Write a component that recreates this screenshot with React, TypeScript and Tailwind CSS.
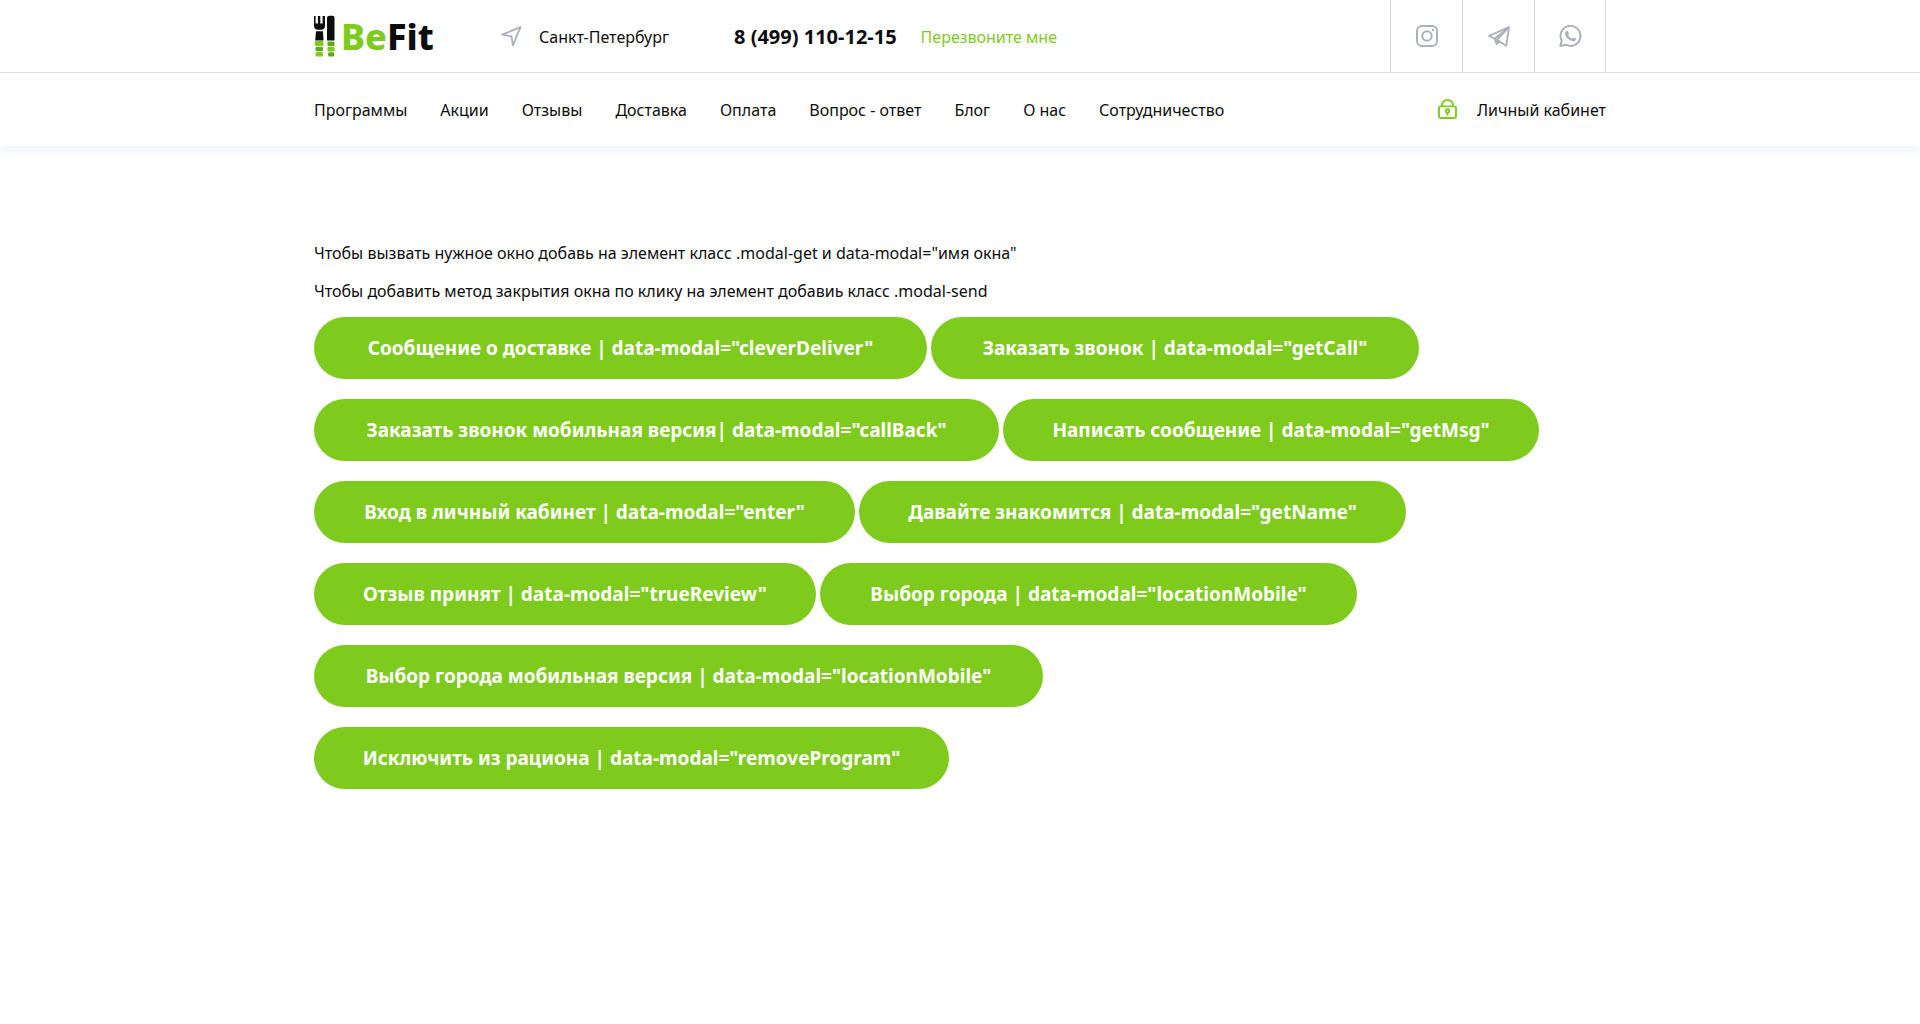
import type { ReactNode } from "react";

const navItems = ["Программы", "Акции", "Отзывы", "Доставка", "Оплата", "Вопрос - ответ", "Блог", "О нас", "Сотрудничество"];

const modalRows = [
  [
    { label: 'Сообщение о доставке | data-modal="cleverDeliver"', modal: "cleverDeliver", size: "min-w-[613px]" },
    { label: 'Заказать звонок | data-modal="getCall"', modal: "getCall", size: "min-w-[488px]" },
  ],
  [
    { label: 'Заказать звонок мобильная версия| data-modal="callBack"', modal: "callBack", size: "min-w-[685px]" },
    { label: 'Написать сообщение | data-modal="getMsg"', modal: "getMsg", size: "min-w-[536px]" },
  ],
  [
    { label: 'Вход в личный кабинет | data-modal="enter"', modal: "enter", size: "min-w-[541px]" },
    { label: 'Давайте знакомится | data-modal="getName"', modal: "getName", size: "min-w-[547px]" },
  ],
  [
    { label: 'Отзыв принят | data-modal="trueReview"', modal: "trueReview", size: "min-w-[502px]" },
    { label: 'Выбор города | data-modal="locationMobile"', modal: "locationMobile", size: "min-w-[537px]" },
  ],
  [{ label: 'Выбор города мобильная версия | data-modal="locationMobile"', modal: "locationMobile", size: "min-w-[729px]" }],
  [{ label: 'Исключить из рациона | data-modal="removeProgram"', modal: "removeProgram", size: "min-w-[635px]" }],
];

function CutleryMark() {
  return (
    <svg width="21" height="42" viewBox="0 0 21 42" aria-hidden="true">
      <path
        fill="#0d0d0d"
        d="M0 1h1.600v7.500h2.300V1h2.400v7.500h2.300V1H11v10c0 2-1.200 3.300-3 3.800H3.200C1.300 14.300 0 13 0 11zM2 16.200h7l.5 9.300H1.200z"
      />
      <path fill="#0d0d0d" d="M13 3.500C13 1.500 14 .8 15.500.8h3c1.500 0 2 .7 2 2v22.700H13z" />
      <g fill="#7ecb1e">
        <rect x="1" y="26" width="8.500" height="5" rx="1" />
        <rect x="1.500" y="37" width="7.500" height="4.500" rx="1.500" />
        <rect x="13.500" y="32" width="7" height="4.500" rx="1" />
      </g>
      <g fill="#62a818">
        <rect x="1.500" y="32" width="7.500" height="4.200" rx="1" />
        <rect x="13.500" y="26.500" width="7" height="4.700" rx="1" />
        <rect x="14" y="37.200" width="6.300" height="4.300" rx="1.500" />
      </g>
    </svg>
  );
}

function LocationIcon() {
  return (
    <svg width="21" height="21" viewBox="0 0 21 21" fill="none" stroke="#adafbb" strokeWidth="1.800" strokeLinejoin="round" aria-hidden="true">
      <path d="M19.500 1.200 1.200 8.700l9.300 1.700 1.400 8.900z" />
    </svg>
  );
}

function InstagramIcon() {
  return (
    <svg width="22" height="22" viewBox="0 0 22 22" fill="none" stroke="#adafbb" strokeWidth="2" aria-hidden="true">
      <rect x="1" y="1" width="20" height="20" rx="5" />
      <circle cx="11" cy="11" r="4.700" />
      <circle cx="16.900" cy="5" r="1.300" fill="#adafbb" stroke="none" />
    </svg>
  );
}

function TelegramIcon() {
  return (
    <svg width="22" height="21" viewBox="0 0 22 21" fill="none" stroke="#adafbb" strokeWidth="1.800" strokeLinejoin="round" aria-hidden="true">
      <path d="M21 1.200 1 9.800l5.600 3 2 5.200 3-2.600 6.600 4.400z" />
      <path d="M21 1.200 6.600 12.800M21 1.200 9.200 13.600l2.400 1.800M9.200 13.600l-.6 4.600" />
    </svg>
  );
}

function WhatsappIcon() {
  return (
    <svg width="23" height="22" viewBox="0 0 23 22" aria-hidden="true">
      <path
        d="M1.300 21 2.700 15.600A10 10 0 1 1 6.800 19.700z"
        fill="none"
        stroke="#adafbb"
        strokeWidth="1.900"
        strokeLinejoin="round"
      />
      <path
        fill="#adafbb"
        d="M7.800 5.900c.5-.2 1-.1 1.200.4l.9 2c.2.500-.6 1.200-.8 1.600.9 1.700 2.200 2.900 4 3.700.5-.3 1.100-1.400 1.600-1.200l2.100 1c.5.300.4.900.2 1.400-.5 1.200-2 1.700-3.300 1.500-3.700-.6-7-3.800-7.700-7.200-.2-1.300.6-2.700 1.800-3.200z"
      />
    </svg>
  );
}

function LockIcon() {
  return (
    <svg width="19" height="20" viewBox="0 0 19 20" fill="none" stroke="#7ecb1e" strokeWidth="1.900" aria-hidden="true">
      <rect x="1" y="7.400" width="17" height="11.600" rx="1.800" />
      <path d="M3.800 7.400v-.7a5.700 5.700 0 0 1 11.400 0v.7" />
      <circle cx="9.500" cy="12" r="1.800" />
      <path d="M9.500 13.600v3" />
    </svg>
  );
}

function SocialLink({ label, children }: { label: string; children: ReactNode }) {
  return (
    <a href="#" aria-label={label} className="flex w-[72px] items-center justify-center border-l border-[#d9dae6] last:border-r">
      {children}
    </a>
  );
}

export default function App() {
  return (
    <div className="min-h-screen bg-white font-['Noto_Sans',sans-serif] text-base text-[#0d0d0d]">
      <header className="pb-px shadow-[0_4px_10px_rgba(200,204,235,0.300)]">
        <div className="border-b border-[#d9dae6]">
          <div className="mx-auto flex h-[72px] max-w-[1292px]">
            <a href="#" aria-label="BeFit" className="flex w-[187px] items-center gap-1.5">
              <CutleryMark />
              <span className="pt-0.5 text-[36px] leading-none font-extrabold">
                <span className="text-[#7ecb1e]">Be</span>Fit
              </span>
            </a>
            <button type="button" className="flex w-[233px] items-center gap-[17px]">
              <LocationIcon />
              <span className="pt-0.5">Санкт-Петербург</span>
            </button>
            <div className="flex items-center gap-6 pt-0.5">
              <a href="tel:84991101215" className="text-xl font-bold">8 (499) 110-12-15</a>
              <button type="button" className="text-[#7ecb1e]">Перезвоните мне</button>
            </div>
            <div className="ml-auto flex">
              <SocialLink label="Instagram"><InstagramIcon /></SocialLink>
              <SocialLink label="Telegram"><TelegramIcon /></SocialLink>
              <SocialLink label="WhatsApp"><WhatsappIcon /></SocialLink>
            </div>
          </div>
        </div>
        <div className="mx-auto flex h-[72px] max-w-[1292px] items-center justify-between">
          <nav className="flex gap-[33px] pt-0.5">
            {navItems.map((item) => (
              <a key={item} href="#" className="whitespace-nowrap">{item}</a>
            ))}
          </nav>
          <a href="#" className="flex items-center gap-5">
            <LockIcon />
            <span className="pt-0.5">Личный кабинет</span>
          </a>
        </div>
      </header>

      <main className="mx-auto max-w-[1292px] pt-[94px]">
        <div className="mb-[13px] flex flex-col gap-3 leading-[26px]">
          <p>Чтобы вызвать нужное окно добавь на элемент класс .modal-get и data-modal="имя окна"</p>
          <p>Чтобы добавить метод закрытия окна по клику на элемент добавиь класс .modal-send</p>
        </div>
        <div className="flex flex-col gap-5">
          {modalRows.map((row, index) => (
            <div key={index} className="flex flex-wrap gap-1">
              {row.map(({ label, modal, size }) => (
                <button
                  key={label}
                  type="button"
                  data-modal={modal}
                  className={`${size} h-[62px] rounded-full bg-[#7ecb1e] px-8 text-[19px] font-bold text-white`}
                >
                  {label}
                </button>
              ))}
            </div>
          ))}
        </div>
      </main>
    </div>
  );
}
